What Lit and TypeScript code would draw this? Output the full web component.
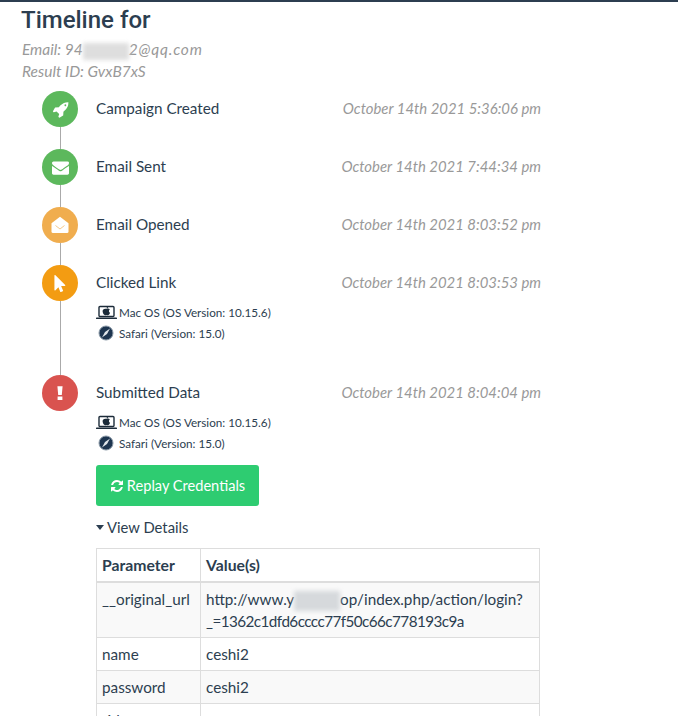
import { LitElement, css, html, svg } from 'lit';
import { customElement } from 'lit/decorators.js';

const FA = {
  rocket: 'M1504 448q0-40-28-68t-68-28-68 28-28 68 28 68 68 28 68-28 28-68zm224-288q0 249-75.5 430.5t-253.5 360.5q-81 80-195 176l-20 379q-2 16-16 26l-384 224q-7 4-16 4-12 0-23-9l-64-64q-13-14-8-32l85-276-281-281-276 85q-3 1-9 1-14 0-23-9l-64-64q-17-19-5-39l224-384q10-14 26-16l379-20q96-114 176-195 188-187 358-258t431-71q14 0 24 9.5t10 22.5z',
  envelope: 'M1792 710v794q0 66-47 113t-113 47h-1472q-66 0-113-47t-47-113v-794q44 49 101 87 362 246 497 345 57 42 92.5 65.5t94.5 48 110 24.5h2q51 0 110-24.5t94.5-48 92.5-65.5q170-123 498-345 57-39 100-87zm0-294q0 79-49 151t-122 123q-376 261-468 325-10 7-42.5 30.5t-54 38-52 32.5-57.5 27-50 9h-2q-23 0-50-9t-57.5-27-52-32.5-54-38-42.5-30.5q-91-64-262-182.5t-205-142.5q-62-42-117-115.5t-55-136.5q0-78 41.5-130t118.5-52h1472q65 0 112.5 47t47.5 113z',
  pointer: 'M1389 1043q31 30 14 69-17 40-59 40h-382l201 476q10 25 0 49t-34 35l-177 75q-25 10-49 0t-35-34l-191-452-312 312q-19 19-45 19-12 0-24-5-40-17-40-59v-1504q0-42 40-59 12-5 24-5 27 0 45 19z',
  refresh: 'M1639 1056q0 5-1 7-64 268-268 434.5t-478 166.5q-146 0-282.5-55t-243.5-157l-129 129q-19 19-45 19t-45-19-19-45v-448q0-26 19-45t45-19h448q26 0 45 19t19 45-19 45l-137 137q71 66 161 102t187 36q134 0 250-65t186-179q11-17 53-117 8-23 30-23h192q13 0 22.5 9.5t9.5 22.5zm25-800v448q0 26-19 45t-45 19h-448q-26 0-45-19t-19-45 19-45l138-138q-148-137-349-137-134 0-250 65t-186 179q-11 17-53 117-8 23-30 23h-199q-13 0-22.5-9.5t-9.5-22.5v-7q65-268 270-434.5t480-166.5q146 0 284 55.5t245 156.5l130-129q19-19 45-19t45 19 19 45z',
};

const fa = (d: string, size: number) => html`<svg width=${size} height=${size} viewBox="0 0 1792 1792" fill="#fff"><path d=${d}></path></svg>`;

const openEnvelope = html`<svg width="18" height="18" viewBox="0 0 18 18">
  <path fill="#fff" d="M.5 7.200 9 .8l8.500 6.400V15.500a1.500 1.500 0 0 1-1.500 1.500H2a1.500 1.500 0 0 1-1.500-1.500z"></path>
  <path fill="none" stroke="#f5c98c" stroke-width="1" d="M4.500 9.500 9 13l4.500-3.500"></path>
</svg>`;

const bang = html`<svg width="16" height="16" viewBox="0 0 16 16" fill="#fff"><path d="M5.400 1.200h5.200l-.8 8.800H6.200zM5.600 11.400h4.800v3.600H5.600z"></path></svg>`;

const macIcon = svg`<svg class="os" width="21" height="16" viewBox="0 0 21 16">
  <rect x="3" y="2.500" width="15" height="10" rx="1" fill="#fff" stroke="#1c2b39" stroke-width="1.400"></rect>
  <path fill="#1c2b39" d="M10.500 5c1-.6 2.600-.6 3.300.5-1.300.8-1.100 2.700.3 3.300-.5 1.200-1.300 2.400-2.200 2.400-.6 0-.9-.3-1.400-.3s-.9.3-1.400.3c-1.200 0-2.500-2.300-2.500-4 0-2 1.900-2.900 3.900-2.200zM10.500 4.400c0-1 .7-1.800 1.700-2 .1 1-.7 1.900-1.700 2z"></path>
  <rect x="0" y="13.600" width="21" height="1.400" rx=".6" fill="#1c2b39"></rect>
</svg>`;

const safariIcon = svg`<svg class="os" width="21" height="16" viewBox="0 0 21 16">
  <circle cx="10" cy="8" r="7" fill="#1d3550" stroke="#8b9aa8" stroke-width="1"></circle>
  <path d="M14 3.500 11 9 6 12.500 9 7z" fill="#dfe5ea"></path>
</svg>`;

const sysInfo = html`<div class="sys">
  <div class="sys-row">${macIcon}<span>Mac OS (OS Version: 10.15.6)</span></div>
  <div class="sys-row">${safariIcon}<span>Safari (Version: 15.0)</span></div>
</div>`;

const rows: [string, unknown][] = [
  ['__original_url', html`http://www.y<span class="redact url"></span>op/index.php/action/login?<span class="token">_=1362c1dfd6cccc77f50c66c778193c9a</span>`],
  ['name', 'ceshi2'],
  ['password', 'ceshi2'],
  ['rid', ''],
];

@customElement('app-root')
export class AppRoot extends LitElement {
  static styles = css`
    :host {
      display: block;
      height: 716px;
      overflow: hidden;
      border-top: 2px solid #2c3e50;
      box-sizing: border-box;
      padding: 0 0 0 22px;
      background: #fff;
      color: #2c3e50;
      font-family: Lato, "Open Sans", sans-serif;
      font-size: 15.25px;
    }

    h1 {
      margin: 4px 0 0 -1px;
      font-size: 24px;
      line-height: 28px;
      font-weight: 500;
      font-family: Roboto, sans-serif;
    }

    .meta {
      margin-top: 4px;
      font-style: italic;
      font-size: 15.5px;
      line-height: 22px;
      color: #999;
    }

    .timeline {
      margin: 9px 0 0 20px;
    }

    .event {
      display: grid;
      grid-template-columns: 36px 1fr;
      column-gap: 18px;
      width: 499px;
    }

    .rail {
      display: flex;
      flex-direction: column;
      align-items: center;
    }

    .rail::after {
      content: "";
      flex: 1;
      width: 1px;
      background: #aaa;
    }

    .event:last-child .rail::after {
      display: none;
    }

    .dot {
      flex: none;
      width: 36px;
      height: 36px;
      border-radius: 50%;
      display: flex;
      align-items: center;
      justify-content: center;
    }

    .body {
      min-height: 58px;
      min-width: 0;
    }

    .head {
      display: flex;
      justify-content: space-between;
      line-height: 34px;
    }

    .date {
      font-style: italic;
      font-size: 14.9px;
      color: #999;
    }

    .sys {
      font-size: 11.7px;
      margin-top: 2px;
      padding-bottom: 32px;
    }

    .sys-row {
      display: flex;
      align-items: center;
      gap: 2px;
      height: 21px;
    }

    .submitted .sys {
      padding-bottom: 0;
    }

    button {
      display: flex;
      align-items: center;
      gap: 3px;
      margin-top: 12px;
      height: 41px;
      width: 163px;
      justify-content: center;
      border: 0;
      border-radius: 3px;
      background: #2ecc71;
      color: #fff;
      font: inherit;
      font-size: 14.6px;
      padding: 0;
    }

    .toggle {
      display: flex;
      align-items: center;
      gap: 3px;
      margin-top: 10px;
      font-size: 14.8px;
      line-height: 22px;
    }

    .caret {
      width: 0;
      height: 0;
      border-left: 4.500px solid transparent;
      border-right: 4.500px solid transparent;
      border-top: 5px solid #2c3e50;
    }

    table {
      margin-top: 10px;
      width: 444px;
      border-collapse: collapse;
      line-height: 22px;
    }

    th, td {
      border: 1px solid #ddd;
      padding: 5px;
      text-align: left;
      vertical-align: top;
    }

    th {
      border-bottom-width: 2px;
      font-size: 15.75px;
      font-weight: 700;
    }

    td:first-child, th:first-child {
      width: 93px;
      white-space: nowrap;
    }

    tbody tr:nth-child(odd) {
      background: #f9f9f9;
    }

    td {
      overflow-wrap: anywhere;
    }

    .token {
      letter-spacing: -0.56px;
    }

    .email-line {
      white-space: nowrap;
    }

    .email-tail {
      letter-spacing: 0.8px;
    }

    .redact {
      display: inline-block;
      vertical-align: middle;
      filter: blur(2px);
    }

    .redact.email {
      width: 46px;
      height: 17px;
      margin: -3px 0;
      background: #dedede;
    }

    .redact.url {
      width: 46px;
      height: 20px;
      margin: -4px 0;
      background: #d6d9dc;
    }
  `;

  protected render() {
    const event = (color: string, icon: unknown, label: string, date: string, extra?: unknown, cls = '') => html`
      <div class="event ${cls}">
        <div class="rail"><div class="dot" style="background:${color}">${icon}</div></div>
        <div class="body">
          <div class="head"><span>${label}</span><span class="date">${date}</span></div>
          ${extra}
        </div>
      </div>`;

    return html`
      <h1>Timeline for</h1>
      <div class="meta">
        <div class="email-line">Email: 94<span class="redact email"></span><span class="email-tail">2@qq.com</span></div>
        <div>Result ID: GvxB7xS</div>
      </div>
      <div class="timeline">
        ${event('#5cb85c', fa(FA.rocket, 17), 'Campaign Created', 'October 14th 2021 5:36:06 pm')}
        ${event('#5cb85c', fa(FA.envelope, 17), 'Email Sent', 'October 14th 2021 7:44:34 pm')}
        ${event('#f0ad4e', openEnvelope, 'Email Opened', 'October 14th 2021 8:03:52 pm')}
        ${event('#f39c12', fa(FA.pointer, 17), 'Clicked Link', 'October 14th 2021 8:03:53 pm', sysInfo)}
        ${event('#d9534f', bang, 'Submitted Data', 'October 14th 2021 8:04:04 pm', html`
          ${sysInfo}
          <button>${fa(FA.refresh, 14)}<span>Replay Credentials</span></button>
          <div class="toggle"><span class="caret"></span><span>View Details</span></div>
          <table>
            <thead><tr><th>Parameter</th><th>Value(s)</th></tr></thead>
            <tbody>${rows.map(([k, v]) => html`<tr><td>${k}</td><td>${v}</td></tr>`)}</tbody>
          </table>
        `, 'submitted')}
      </div>
    `;
  }
}
